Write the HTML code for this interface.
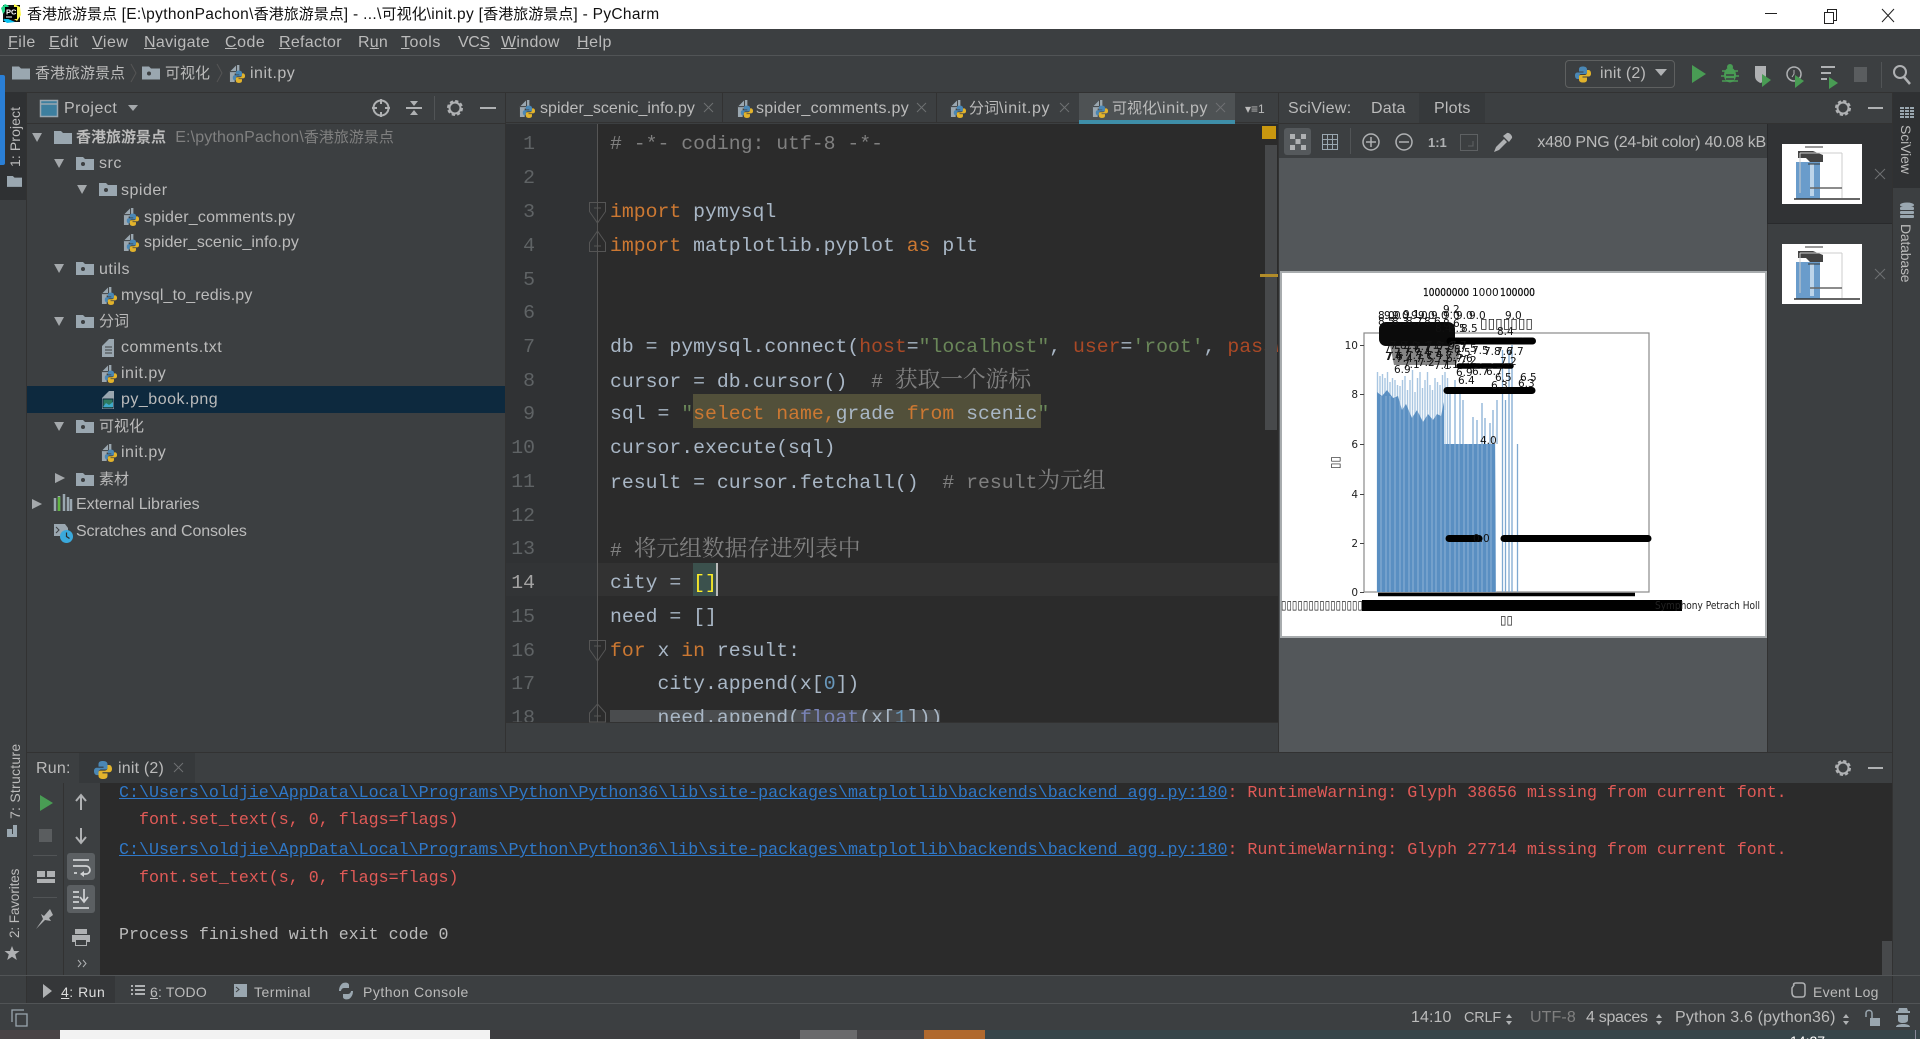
<!DOCTYPE html>
<html lang="zh"><head><meta charset="utf-8"><title>PyCharm</title>
<style>
*{box-sizing:border-box}
html,body{margin:0;padding:0;width:1920px;height:1039px;overflow:hidden;background:#3c3f41}
body{position:relative;font:16px/20px "Liberation Sans","Noto Sans CJK SC",sans-serif;color:#bbb}
.b{position:absolute}
.t{position:absolute;white-space:pre;letter-spacing:.5px;height:20px;line-height:20px}
.z{font-size:15px;letter-spacing:0}
.code{position:absolute;left:610px;white-space:pre;font:19.8px/34px "Liberation Mono","Noto Serif CJK SC",monospace;height:34px;color:#a9b7c6}
.n{position:absolute;width:24px;left:511px;text-align:right;font:19.8px/34px "Liberation Mono",monospace;height:34px;color:#5f6365}
.k{color:#cc7832}.c{color:#808080}.s{color:#6a8759}.a{color:#aa4926}.d{color:#6897bb}.bi{color:#7a84b8}
.cj{font-size:22.7px;font-family:"Noto Serif CJK SC",serif}
.con{position:absolute;left:119px;white-space:pre;font:16.655px/28px "Liberation Mono",monospace;height:28px;color:#e05a57}
.lk{color:#2f78c8;text-decoration:underline}
.tb{font-size:14px}
.vl{position:absolute;writing-mode:vertical-rl;transform:rotate(180deg);white-space:pre;font-size:14px;line-height:16px;color:#bbb}
.vr{position:absolute;writing-mode:vertical-rl;white-space:pre;font-size:14px;line-height:16px;color:#bbb}
svg.o{position:absolute;left:0;top:0}
</style></head><body>

<!-- title bar -->
<div class="b" style="left:0;top:0;width:1920px;height:29px;background:#fff"></div>
<div class="t" style="left:27px;top:5px;color:#111;letter-spacing:.32px;font-size:15.5px"><span class="z">香港旅游景点</span> [E:\pythonPachon\<span class="z">香港旅游景点</span>] - ...\<span class="z">可视化</span>\init.py [<span class="z">香港旅游景点</span>] - PyCharm</div>

<!-- menu -->
<div class="b" style="left:0;top:55px;width:1920px;height:1px;background:#515456"></div>
<div class="t" style="left:8px;top:33px"><u>F</u>ile</div>
<div class="t" style="left:49px;top:33px"><u>E</u>dit</div>
<div class="t" style="left:92px;top:33px"><u>V</u>iew</div>
<div class="t" style="left:144px;top:33px;letter-spacing:.35px"><u>N</u>avigate</div>
<div class="t" style="left:225px;top:33px"><u>C</u>ode</div>
<div class="t" style="left:279px;top:33px;letter-spacing:.3px"><u>R</u>efactor</div>
<div class="t" style="left:358px;top:33px;letter-spacing:.2px">R<u>u</u>n</div>
<div class="t" style="left:401px;top:33px"><u>T</u>ools</div>
<div class="t" style="left:458px;top:33px;letter-spacing:-.4px">VC<u>S</u></div>
<div class="t" style="left:501px;top:33px;letter-spacing:.3px"><u>W</u>indow</div>
<div class="t" style="left:577px;top:33px"><u>H</u>elp</div>

<!-- nav -->
<div class="t" style="left:35px;top:64px"><span class="z">香港旅游景点</span></div>
<div class="t" style="left:165px;top:64px"><span class="z">可视化</span></div>
<div class="t" style="left:250px;top:64px">init.py</div>

<!-- backgrounds -->
<div class="b" style="left:0;top:92px;width:1920px;height:1px;background:#323232"></div>
<div class="b" style="left:0;top:92px;width:26px;height:108px;background:#2f3133"></div>
<div class="b" style="left:0;top:75px;width:5px;height:90px;background:#2a7fd6;border-radius:0 2px 2px 0"></div>
<div class="b" style="left:26px;top:92px;width:1px;height:911px;background:#323232"></div>
<div class="b" style="left:27px;top:123px;width:478px;height:1px;background:#323232"></div>
<div class="b" style="left:27px;top:386px;width:478px;height:27px;background:#0d293e"></div>
<div class="b" style="left:505px;top:92px;width:1px;height:660px;background:#323232"></div>

<!-- left vertical tabs -->
<div class="vl" style="left:7px;top:107px;height:60px;letter-spacing:.1px">1: Project</div>
<div class="vl" style="left:7px;top:745px;height:74px;letter-spacing:.25px">7: Structure</div>
<div class="vl" style="left:7px;top:870px;height:68px;letter-spacing:-.1px;font-size:13.5px">2: Favorites</div>

<!-- project header & tree -->
<div class="t" style="left:64px;top:99px">Project</div>
<div class="t" style="left:76px;top:128px"><b class="z">香港旅游景点</b><span style="color:#808080;letter-spacing:.15px">  E:\pythonPachon\<span class="z">香港旅游景点</span></span></div>
<div class="t" style="left:99px;top:154px">src</div>
<div class="t" style="left:121px;top:181px">spider</div>
<div class="t" style="left:144px;top:208px;letter-spacing:.2px">spider_comments.py</div>
<div class="t" style="left:144px;top:233px;letter-spacing:.05px">spider_scenic_info.py</div>
<div class="t" style="left:99px;top:260px">utils</div>
<div class="t" style="left:121px;top:286px;letter-spacing:.15px">mysql_to_redis.py</div>
<div class="t" style="left:99px;top:312px"><span class="z">分词</span></div>
<div class="t" style="left:121px;top:338px">comments.txt</div>
<div class="t" style="left:121px;top:364px">init.py</div>
<div class="t" style="left:121px;top:390px">py_book.png</div>
<div class="t" style="left:99px;top:417px"><span class="z">可视化</span></div>
<div class="t" style="left:121px;top:443px">init.py</div>
<div class="t" style="left:99px;top:470px"><span class="z">素材</span></div>
<div class="t" style="left:76px;top:495px;letter-spacing:-.05px">External Libraries</div>
<div class="t" style="left:76px;top:522px;letter-spacing:-.12px">Scratches and Consoles</div>

<!-- tabs -->
<div class="b" style="left:506px;top:93px;width:772px;height:30px;background:#3c3f41;border-bottom:1px solid #323232"></div>
<div class="b" style="left:722px;top:93px;width:1px;height:30px;background:#323232"></div>
<div class="b" style="left:936px;top:93px;width:1px;height:30px;background:#323232"></div>
<div class="b" style="left:1079px;top:93px;width:156px;height:31px;background:#4e5254;border-bottom:4px solid #3e8ea8"></div>
<div class="t" style="left:540px;top:99px;letter-spacing:.05px">spider_scenic_info.py</div>
<div class="t" style="left:756px;top:99px;letter-spacing:.3px">spider_comments.py</div>
<div class="t" style="left:969px;top:99px;letter-spacing:.6px"><span class="z">分词</span>\init.py</div>
<div class="t" style="left:1112px;top:99px;letter-spacing:.6px"><span class="z">可视化</span>\init.py</div>
<div class="t" style="left:1245px;top:99px;font-size:12px;letter-spacing:0">▾≡1</div>

<!-- editor -->
<div class="b" style="left:506px;top:124px;width:91px;height:598px;background:#303234"></div>
<div class="b" style="left:597px;top:124px;width:681px;height:598px;background:#2b2b2b"></div>
<div class="b" style="left:597px;top:563px;width:681px;height:33px;background:#323232"></div>
<div class="b" style="left:506px;top:563px;width:91px;height:33px;background:#323436"></div>
<div class="b" style="left:597px;top:124px;width:1px;height:598px;background:#555"></div>
<div class="b" style="left:693px;top:394px;width:348px;height:34px;background:#52503a"></div>
<div class="b" style="left:693px;top:563px;width:24px;height:33px;background:#3b514d"></div>
<div class="b" style="left:716px;top:563px;width:2px;height:33px;background:#bbb"></div>
<div class="b" style="left:610px;top:710px;width:330px;height:12px;background:#4a4c4e"></div>

<div class="b" style="left:506px;top:124px;width:772px;height:598px;overflow:hidden">
<div style="position:absolute;left:-506px;top:-124px;width:1920px;height:1039px">
<div class="n" style="top:127px">1</div><div class="n" style="top:161px">2</div><div class="n" style="top:195px">3</div><div class="n" style="top:229px">4</div><div class="n" style="top:263px">5</div><div class="n" style="top:296px">6</div><div class="n" style="top:330px">7</div><div class="n" style="top:364px">8</div><div class="n" style="top:397px">9</div><div class="n" style="top:431px">10</div><div class="n" style="top:465px">11</div><div class="n" style="top:499px">12</div><div class="n" style="top:532px">13</div><div class="n" style="top:566px;color:#a4a3a3">14</div><div class="n" style="top:600px">15</div><div class="n" style="top:634px">16</div><div class="n" style="top:667px">17</div><div class="n" style="top:701px">18</div>
<div class="code c" style="top:127px"># -*- coding: utf-8 -*-</div>
<div class="code" style="top:195px"><span class="k">import</span> pymysql</div>
<div class="code" style="top:229px"><span class="k">import</span> matplotlib.pyplot <span class="k">as</span> plt</div>
<div class="code" style="top:330px">db = pymysql.connect(<span class="a">host</span>=<span class="s">"localhost"</span>, <span class="a">user</span>=<span class="s">'root'</span>, <span class="a">passwd</span>=<span class="s">'123456'</span></div>
<div class="code" style="top:361px">cursor = db.cursor()  <span class="c"># <span class="cj">获取一个游标</span></span></div>
<div class="code" style="top:397px">sql = <span class="s">"</span><span class="k">select name,</span>grade <span class="k">from</span> scenic<span class="s">"</span></div>
<div class="code" style="top:431px">cursor.execute(sql)</div>
<div class="code" style="top:462px">result = cursor.fetchall()  <span class="c"># result<span class="cj">为元组</span></span></div>
<div class="code c" style="top:530px"># <span class="cj">将元组数据存进列表中</span></div>
<div class="code" style="top:566px">city = <span style="color:#ffef28">[]</span></div>
<div class="code" style="top:600px">need = []</div>
<div class="code" style="top:634px"><span class="k">for</span> x <span class="k">in</span> result:</div>
<div class="code" style="top:667px">    city.append(x[<span class="d">0</span>])</div>
<div class="code" style="top:701px">    need.append(<span class="bi">float</span>(x[<span class="d">1</span>]))</div>
</div></div>
<div class="b" style="left:1265px;top:145px;width:12px;height:285px;background:#47494b"></div>
<div class="b" style="left:1262px;top:126px;width:14px;height:13px;background:#c9970f"></div>
<div class="b" style="left:1260px;top:274px;width:18px;height:3px;background:#b28c2a"></div>
<div class="b" style="left:506px;top:722px;width:772px;height:1px;background:#323232"></div>

<!-- sciview -->
<div class="b" style="left:1278px;top:92px;width:1px;height:660px;background:#323232"></div>
<div class="b" style="left:1419px;top:93px;width:66px;height:30px;background:#36393b"></div>
<div class="b" style="left:1279px;top:123px;width:613px;height:1px;background:#323232"></div>
<div class="t" style="left:1288px;top:99px;letter-spacing:.3px">SciView:</div>
<div class="t" style="left:1371px;top:99px;letter-spacing:.2px">Data</div>
<div class="t" style="left:1434px;top:99px;letter-spacing:.2px">Plots</div>
<div class="b" style="left:1279px;top:158px;width:488px;height:594px;background:#53575a"></div>
<div class="b" style="left:1284px;top:128px;width:27px;height:27px;background:#55595c;border-radius:3px"></div>
<div class="b" style="left:1535px;top:132px;width:232px;height:20px;overflow:hidden"><div class="t" style="right:1px;top:1px;letter-spacing:-.22px">640 x480 PNG (24-bit color) 40.08 kB</div></div>
<div class="b" style="left:1767px;top:124px;width:125px;height:100px;background:#313335;border-left:1px solid #292a2c;border-bottom:1px solid #292a2c"></div>
<div class="b" style="left:1767px;top:224px;width:1px;height:528px;background:#323232"></div>
<div class="b" style="left:1892px;top:92px;width:1px;height:911px;background:#323232"></div>
<div class="b" style="left:1893px;top:92px;width:27px;height:96px;background:#2f3133"></div>
<div class="vr" style="left:1898px;top:125px;letter-spacing:-.1px">SciView</div>
<div class="vr" style="left:1898px;top:224px;letter-spacing:-.2px">Database</div>

<!-- combo -->
<div class="b" style="left:1565px;top:60px;width:110px;height:28px;border:1px solid #5e6060;border-radius:4px"></div>
<div class="t" style="left:1600px;top:64px;letter-spacing:.2px">init (2)</div>

<!-- run panel -->
<div class="b" style="left:27px;top:752px;width:1865px;height:1px;background:#323232"></div>
<div class="b" style="left:79px;top:753px;width:116px;height:30px;background:#36393b"></div>
<div class="t" style="left:36px;top:759px;letter-spacing:.2px">Run:</div>
<div class="t" style="left:118px;top:759px;letter-spacing:.2px">init (2)</div>
<div class="b" style="left:100px;top:783px;width:1792px;height:192px;background:#2b2b2b"></div>
<div class="b" style="left:63px;top:783px;width:1px;height:192px;background:#323232"></div>
<div class="b" style="left:67px;top:853px;width:28px;height:27px;background:#5b5f62;border-radius:3px"></div>
<div class="b" style="left:67px;top:885px;width:28px;height:28px;background:#5b5f62;border-radius:3px"></div>
<div class="b" style="left:33px;top:855px;width:24px;height:1px;background:#515456"></div>
<div class="b" style="left:33px;top:897px;width:24px;height:1px;background:#515456"></div>
<div class="con" style="top:779px"><span class="lk">C:\Users\oldjie\AppData\Local\Programs\Python\Python36\lib\site-packages\matplotlib\backends\backend_agg.py:180</span>: RuntimeWarning: Glyph 38656 missing from current font.</div>
<div class="con" style="top:806px">  font.set_text(s, 0, flags=flags)</div>
<div class="con" style="top:836px"><span class="lk">C:\Users\oldjie\AppData\Local\Programs\Python\Python36\lib\site-packages\matplotlib\backends\backend_agg.py:180</span>: RuntimeWarning: Glyph 27714 missing from current font.</div>
<div class="con" style="top:864px">  font.set_text(s, 0, flags=flags)</div>
<div class="con" style="top:921px;color:#bbb">Process finished with exit code 0</div>
<div class="b" style="left:1882px;top:941px;width:10px;height:34px;background:#47494b"></div>

<!-- bottom tool bar -->
<div class="b" style="left:0;top:975px;width:1920px;height:1px;background:#515456"></div>
<div class="b" style="left:27px;top:976px;width:88px;height:27px;background:#353739"></div>
<div class="b" style="left:0;top:1003px;width:1920px;height:1px;background:#515456"></div>
<div class="t tb" style="left:61px;top:982px;color:#ddd"><u>4</u>: Run</div>
<div class="t tb" style="left:150px;top:982px;letter-spacing:.2px"><u>6</u>: TODO</div>
<div class="t tb" style="left:254px;top:982px">Terminal</div>
<div class="t tb" style="left:363px;top:982px">Python Console</div>
<div class="t tb" style="left:1813px;top:982px;letter-spacing:.3px">Event Log</div>

<!-- status -->
<div class="t" style="left:1411px;top:1008px;letter-spacing:.1px">14:10</div>
<div class="t" style="left:1464px;top:1008px;letter-spacing:-.2px;font-size:14.5px">CRLF</div>
<div class="t" style="left:1530px;top:1008px;letter-spacing:.1px;color:#808080">UTF-8</div>
<div class="t" style="left:1586px;top:1008px;letter-spacing:-.3px">4 spaces</div>
<div class="t" style="left:1675px;top:1008px;letter-spacing:.15px">Python 3.6 (python36)</div>

<!-- taskbar -->
<div class="b" style="left:0;top:1030px;width:1920px;height:9px;background:#37454a"></div>
<div class="b" style="left:0;top:1030px;width:60px;height:9px;background:#4a4446"></div>
<div class="b" style="left:60px;top:1030px;width:430px;height:9px;background:#f2f2f2"></div>
<div class="b" style="left:490px;top:1030px;width:310px;height:9px;background:#3e3d40"></div>
<div class="b" style="left:800px;top:1030px;width:57px;height:9px;background:#6a6a6c"></div>
<div class="b" style="left:857px;top:1030px;width:67px;height:9px;background:#474649"></div>
<div class="b" style="left:924px;top:1030px;width:61px;height:9px;background:#b0692e"></div>
<div class="b" style="left:1915px;top:1030px;width:1px;height:9px;background:#889"></div>

<!-- image viewer -->
<div class="b" style="left:1280px;top:271px;width:487px;height:367px;background:#fff;border:2px solid #a8acae"></div>

<svg class="o" width="1920" height="1039" viewBox="0 0 1920 1039" xmlns="http://www.w3.org/2000/svg">
<defs>
<symbol id="py" viewBox="0 0 16 16" overflow="visible"><path d="M8 0C5 0 4 1 4 3v2h4.500v1H2.500C1 6 0 7 0 9s1 3.500 2.500 3.500H4V10c0-1.500 1-2.500 2.500-2.500h4C11.500 7.500 12 7 12 6V3c0-2-1.500-3-4-3z" fill="#4a87b5"/><path d="M8 16c3 0 4-1 4-3v-2H7.500v-1h6C15 10 16 9 16 7s-1-3.500-2.500-3.500H12V6c0 1.500-1 2.500-2.500 2.500h-4C4.500 8.500 4 9 4 10v3c0 2 1.500 3 4 3z" fill="#e2b32c"/></symbol>
<symbol id="pf" viewBox="0 0 18 20" overflow="visible"><path d="M1 8L8 1h3v9H1z" fill="#9aa7b0"/><path d="M1 8h7V1" fill="none" stroke="#3c3f41"/><path d="M1 9h5v10H1z" fill="#9aa7b0"/><use href="#py" x="4" y="7" width="13" height="13"/></symbol>
<symbol id="fd" viewBox="0 0 18 14"><path d="M0 1h7l2 2h9v11H0z" fill="#9aa7b0"/><circle cx="7" cy="8" r="2" fill="#3c3f41"/></symbol>
<symbol id="fr" viewBox="0 0 18 14"><path d="M0 1h7l2 2h9v11H0z" fill="#9aa7b0"/></symbol>
<symbol id="dn" viewBox="0 0 12 10"><path d="M0 0h11L5.500 10z" fill="#a4a8ab"/></symbol>
<symbol id="rt" viewBox="0 0 12 12"><path d="M0 0l11 5.500L0 11z" fill="#a4a8ab"/></symbol>
<symbol id="gear" viewBox="0 0 16 16"><circle cx="8" cy="8" r="5.500" fill="none" stroke="#afb1b3" stroke-width="2"/><circle cx="8" cy="8" r="6.500" fill="none" stroke="#afb1b3" stroke-width="3" stroke-dasharray="3 2.100"/></symbol>
</defs>

<!-- window controls -->
<path d="M1765 13.500h12" stroke="#222"/>
<path d="M1824.500 12.500h9v11h-9z M1827.500 12.500v-3h9v11h-3" fill="none" stroke="#222"/>
<path d="M1882 9l12 13M1894 9l-12 13" stroke="#222"/>

<!-- pycharm logo -->
<rect x="3" y="5" width="17" height="17" fill="#111"/>
<path d="M1 8l4-4 4 2-6 8z" fill="#21d789"/><path d="M14 4l6 3 1 8-4 6-3-2z" fill="#fcf84a"/><path d="M3 20l4 3 8-1-9-4z" fill="#07c3f2"/>
<rect x="5" y="7" width="12" height="12" fill="#000"/><text x="6" y="14.500" font-family="Liberation Sans" font-size="7.500" font-weight="700" fill="#fff">PC</text><rect x="6" y="16.500" width="6" height="1" fill="#fff"/>

<!-- nav icons -->
<use href="#fr" x="12" y="65" width="18" height="15"/>
<use href="#fd" x="142" y="65" width="18" height="15"/>
<path d="M131 64l5 9-5 9M217 64l5 9-5 9" fill="none" stroke="#555"/>
<use href="#pf" x="229" y="64" width="17" height="19"/>

<!-- left strip icons -->
<use href="#fr" x="7" y="175" width="15" height="12"/>
<path d="M7 829h5v5H7zM13 825h4v9h-4z" fill="#9aa7b0"/><rect x="7" y="834" width="10" height="3" fill="#9aa7b0"/>
<path d="M12 946l2 5h5.500l-4.300 3.400 1.600 5.600L12 956.800 7.200 960l1.600-5.600L4.500 951H10z" fill="#afb1b3"/>

<!-- project header icons -->
<rect x="40.500" y="100.500" width="17" height="16" fill="#3d7f9f" stroke="#9aa7b0" stroke-width="1.500"/><path d="M40 104h18" stroke="#9aa7b0" stroke-width="1.500"/>
<path d="M128 105h10l-5 6z" fill="#a4a8ab"/>
<g fill="none" stroke="#afb1b3" stroke-width="2"><circle cx="381" cy="108" r="7.500"/><path d="M381 99v5M381 112v5M372 108h5M385 108h5"/></g>
<path d="M406 108h16" stroke="#afb1b3" stroke-width="2"/><path d="M414 106l-4-5h8zM414 110l-4 5h8z" fill="#afb1b3"/>
<path d="M434.500 96v24" stroke="#515456"/>
<use href="#gear" x="447" y="100" width="16" height="16"/>
<path d="M480 108h16" stroke="#afb1b3" stroke-width="2"/>

<!-- tree arrows -->
<use href="#dn" x="32" y="133" width="11" height="9"/><use href="#dn" x="54" y="159" width="11" height="9"/><use href="#dn" x="77" y="185" width="11" height="9"/><use href="#dn" x="54" y="264" width="11" height="9"/><use href="#dn" x="54" y="317" width="11" height="9"/><use href="#dn" x="54" y="422" width="11" height="9"/>
<use href="#rt" x="55" y="473" width="11" height="11"/><use href="#rt" x="32" y="499" width="11" height="11"/>
<!-- tree icons -->
<use href="#fr" x="54" y="130" width="18" height="14"/>
<use href="#fd" x="76" y="156" width="18" height="14"/><use href="#fd" x="99" y="182" width="18" height="14"/><use href="#fd" x="76" y="261" width="18" height="14"/><use href="#fd" x="76" y="314" width="18" height="14"/><use href="#fd" x="76" y="419" width="18" height="14"/><use href="#fd" x="76" y="472" width="18" height="14"/>
<use href="#pf" x="123" y="207" width="17" height="19"/><use href="#pf" x="123" y="233" width="17" height="19"/><use href="#pf" x="101" y="286" width="17" height="19"/><use href="#pf" x="101" y="364" width="17" height="19"/><use href="#pf" x="101" y="443" width="17" height="19"/>
<path d="M102 346l7-7h5v18h-12z" fill="#9aa7b0"/><path d="M105 347h7M105 350h7M105 353h7" stroke="#3c3f41"/>
<path d="M102 398l7-7h5v18h-12z" fill="#9aa7b0"/><rect x="103" y="399" width="10" height="9" fill="#2f7a5f" stroke="#0d293e"/><path d="M103 407l3-4 3 2 4-3v5z" fill="#3ea9c9"/>
<path d="M55 498v13M59 496v15M64 494v17M68 497v14M71 499v12" stroke="#9aa7b0" stroke-width="2.500"/><path d="M59 497v14" stroke="#62b543" stroke-width="2.500"/>
<path d="M54 524h11l3 4v8H54z" fill="#9aa7b0"/><path d="M56 527l3 3-3 3" stroke="#3c3f41" fill="none"/><circle cx="66.500" cy="536.500" r="6.500" fill="#3aa9dc"/><path d="M66.500 532.500v4l3 2" stroke="#2b2b2b" stroke-width="1.200" fill="none"/>

<!-- tab icons -->
<use href="#pf" x="519" y="99" width="17" height="19"/><use href="#pf" x="737" y="99" width="17" height="19"/><use href="#pf" x="950" y="99" width="17" height="19"/><use href="#pf" x="1092" y="99" width="17" height="19"/>
<g stroke="#6e7072" fill="none"><path d="M704 103l9 9M713 103l-9 9M917 103l9 9M926 103l-9 9M1060 103l9 9M1069 103l-9 9M1216 103l9 9M1225 103l-9 9"/></g>

<!-- folding -->
<g fill="none" stroke="#555" stroke-width="1">
<path d="M589.500 202.500h16v9l-8 11.500-8-11.500zM594 208h7"/>
<path d="M589.500 251.500h16v-9l-8-11.500-8 11.500zM594 246h7"/>
<path d="M589.500 640.500h16v9l-8 11.500-8-11.500zM594 646h7"/>
<path d="M589.500 722h16v-9l-8-9-8 9zM594 716h7"/>
</g>

<!-- run toolbar top -->
<use href="#py" x="1575" y="66" width="16" height="17"/>
<path d="M1655 69h12l-6 7z" fill="#afb1b3"/>
<path d="M1692 65l14 9-14 9z" fill="#499c54"/>
<g fill="#499c54"><ellipse cx="1730" cy="75" rx="6" ry="7.500"/><circle cx="1730" cy="67" r="3"/><path d="M1722 71h16M1721 76h18M1722 81h16" stroke="#499c54" stroke-width="1.500"/><path d="M1726 75h8M1726 79h8" stroke="#3c3f41" stroke-width="1.500"/></g>
<path d="M1755 66h11v10c0 4-3 6-5.500 7-2.500-1-5.500-3-5.500-7z" fill="#afb1b3"/><path d="M1762 74l9 6-9 7z" fill="#499c54"/>
<circle cx="1794" cy="74" r="7" fill="none" stroke="#afb1b3" stroke-width="1.500"/><path d="M1794 70v4l-2 3" stroke="#afb1b3" fill="none"/><path d="M1795 75l9 6-9 7z" fill="#499c54"/>
<path d="M1821 67h14M1821 73h10M1821 79h6" stroke="#afb1b3" stroke-width="2"/><path d="M1829 77l9 6-9 6z" fill="#499c54"/>
<rect x="1854" y="67" width="13" height="15" fill="#5a5d5f"/>
<path d="M1881.500 62v26" stroke="#515456"/>
<circle cx="1900" cy="72" r="6" fill="none" stroke="#afb1b3" stroke-width="2"/><path d="M1904 77l6 7" stroke="#afb1b3" stroke-width="2.500"/>

<!-- sciview icons -->
<use href="#gear" x="1835" y="100" width="16" height="16"/>
<path d="M1868 108h15" stroke="#afb1b3" stroke-width="2"/>
<g fill="#afb1b3"><rect x="1290" y="134" width="5" height="5"/><rect x="1301" y="134" width="5" height="5"/><rect x="1295.500" y="139" width="5" height="5"/><rect x="1290" y="145" width="5" height="5"/><rect x="1301" y="145" width="5" height="5"/></g>
<path d="M1322.500 134.500h15v15h-15zM1327.500 134.500v15M1332.500 134.500v15M1322.500 139.500h15M1322.500 144.500h15" fill="none" stroke="#9aa7b0"/>
<path d="M1350.500 128v26" stroke="#515456"/>
<g fill="none" stroke="#afb1b3" stroke-width="1.500"><circle cx="1371" cy="142" r="8"/><path d="M1366 142h10M1371 137v10"/><circle cx="1404" cy="142" r="8"/><path d="M1399 142h10"/></g>
<text x="1428" y="147" font-family="Liberation Sans" font-size="13" font-weight="700" fill="#afb1b3">1:1</text>
<path d="M1460.500 134.500h17v16h-17z" fill="none" stroke="#5e6163"/><path d="M1468 146h5v-5" stroke="#5e6163" fill="none"/>
<path d="M1494 152l2-5 8-8 3 3-8 8zM1503 136l6 6 3-4c1-2-3-6-5-5z" fill="#afb1b3"/>

<!-- right strip icons -->
<g fill="#9aa7b0"><rect x="1900" y="107" width="14" height="2"/><rect x="1900" y="110" width="14" height="2"/><rect x="1900" y="113" width="14" height="2"/><rect x="1900" y="116" width="14" height="2"/></g><path d="M1904.500 107v11M1909.500 107v11" stroke="#2f3133"/>
<g fill="#9aa7b0"><ellipse cx="1907" cy="205" rx="7" ry="2.500"/><rect x="1900" y="207" width="14" height="3" rx="1"/><rect x="1900" y="211" width="14" height="3" rx="1"/><rect x="1900" y="215" width="14" height="3" rx="1"/></g>

<!-- thumbnails -->
<g>
<rect x="1782" y="144" width="80" height="60" fill="#fff"/>
<rect x="1796" y="162" width="24" height="37" fill="#6a9ccb"/><rect x="1810" y="164" width="4" height="32" fill="#bcd4ea"/>
<path d="M1798 151h15l10 4v7h-13l-4-4h-8z" fill="#222" opacity=".85"/><path d="M1805 147h18M1808 164h12" stroke="#333"/>
<path d="M1800 153v40M1842 153v45M1800 153h42" stroke="#ccc" fill="none"/>
<path d="M1810 188h32" stroke="#666" stroke-width="1.500"/><path d="M1794 199h66" stroke="#333" stroke-width="1.500"/>
</g>
<g>
<rect x="1782" y="244" width="80" height="60" fill="#fff"/>
<rect x="1796" y="262" width="24" height="37" fill="#6a9ccb"/><rect x="1810" y="264" width="4" height="32" fill="#bcd4ea"/>
<path d="M1798 251h15l10 4v7h-13l-4-4h-8z" fill="#222" opacity=".85"/><path d="M1805 247h18M1808 264h12" stroke="#333"/>
<path d="M1800 253v40M1842 253v45M1800 253h42" stroke="#ccc" fill="none"/>
<path d="M1810 288h32" stroke="#666" stroke-width="1.500"/><path d="M1794 299h66" stroke="#333" stroke-width="1.500"/>
</g>
<path d="M1875 169l10 10M1885 169l-10 10M1875 269l10 10M1885 269l-10 10" stroke="#6e7072"/>

<!-- chart -->
<rect x="1364" y="333" width="285" height="259" fill="none" stroke="#8a8a8a" stroke-width="1.200"/>
<!-- light bar tips -->
<g stroke="#a9c6e2" stroke-width="1.400"><path d="M1377.500 592V372M1380 592V376M1382.500 592V374M1385 592V378M1387.500 592V372M1390 592V382M1392.500 592V378M1395 592V380M1397.500 592V385M1400 592V386M1402.500 592V380M1405 592V376M1407.500 592V390M1410 592V380M1412.500 592V370M1415 592V392M1417.500 592V378M1420 592V372M1422.500 592V388M1425 592V380M1427.500 592V372M1430 592V385M1432.500 592V390M1435 592V378M1437.500 592V382M1440 592V385M1442.500 592V375M1445 592V372M1447.500 592V378"/></g>
<path d="M1377 592V392l5 4 5-6 6 8 5-2 4 14 4-6 6 14 5-8 6 12 5-8 5 6 4-6 4 2 3-14V444h51v-22l1 170z" fill="#5a8fc2"/>
<g stroke="#fff" stroke-opacity=".4" stroke-width=".8"><path d="M1381 396v196M1386 396v196M1390 396v196M1395 396v196M1400 400v192M1404 400v192M1409 410v182M1413 410v182M1418 410v182M1423 410v182M1427 410v182M1432 410v182M1436 410v182M1441 410v182M1445 410v182M1450 444v148M1455 444v148M1459 444v148M1464 444v148M1468 444v148M1473 444v148M1478 444v148M1482 444v148M1487 444v148M1491 444v148M1496 444v148"/></g>
<g stroke="#7fa9d1" stroke-width="1.200"><path d="M1450 444V393M1455 444V380M1460 444V393M1463 444V400M1473 444V417M1477 444V420M1482 444V403M1485 444V418M1490 444V423M1493 444V410M1497 444V400"/></g>
<g stroke="#7fa9d1" stroke-width="1.300"><path d="M1502.500 592V350M1505.500 592V400M1509 592V350M1512 592V345M1517.500 592V444"/></g>
<!-- ticks -->
<g stroke="#444" stroke-width="1"><path d="M1360 345.500h4M1360 394.500h4M1360 444.500h4M1360 494.500h4M1360 543.500h4M1360 592.500h4"/></g>
<g font-family="DejaVu Sans" font-size="10.500" fill="#222" text-anchor="end"><text x="1358" y="349">10</text><text x="1358" y="398">8</text><text x="1358" y="448">6</text><text x="1358" y="498">4</text><text x="1358" y="547">2</text><text x="1358" y="596">0</text></g>
<!-- dense label mass -->
<rect x="1379" y="322" width="76" height="24" rx="7" fill="#0b0b0b"/>
<path d="M1390 345h68l2 8-4 12h-62z" fill="#222" opacity=".55"/>
<g stroke="#000" stroke-linecap="round" fill="none">
<path d="M1450 341h83" stroke-width="7" stroke-dasharray="9 1.500"/>
<path d="M1447 390.500h85" stroke-width="7"/>
<path d="M1459 366h52" stroke-width="5.500" stroke-dasharray="9 2.500"/>
<path d="M1449 538.500h30" stroke-width="7"/>
<path d="M1504 538.500h144" stroke-width="7"/>
<path d="M1378 594.500h257" stroke-width="3.500" stroke-linecap="butt"/>
<path d="M1362 605.500h320" stroke-width="11" stroke-linecap="butt"/>
</g>
<g font-family="DejaVu Sans" font-size="10.500" fill="#111">
<text x="1423" y="296" textLength="46" lengthAdjust="spacingAndGlyphs" stroke="#111" stroke-width=".3">10000000</text><text x="1472" y="296">1000</text><text x="1500" y="296" textLength="35" lengthAdjust="spacingAndGlyphs" stroke="#111" stroke-width=".3">100000</text>
<text x="1378" y="319">8.0</text><text x="1384" y="319">9.0</text><text x="1392" y="319">9.0</text><text x="1403" y="318">9.1</text><text x="1411" y="319">9.0</text><text x="1418" y="319">9.0</text><text x="1431" y="319">9.0</text><text x="1443" y="319">9.0</text><text x="1456" y="319">9.0</text><text x="1469" y="319">9.0</text><text x="1443" y="313">9.2</text><text x="1505" y="319">9.0</text>
<text x="1378" y="325">8.5</text><text x="1392" y="325">8.3</text><text x="1406" y="325">8.7</text><text x="1424" y="325">8.6</text><text x="1443" y="327">8.6</text><text x="1461" y="332">8.5</text><text x="1497" y="335">8.4</text><text x="1449" y="332">8.5</text><text x="1435" y="332">8.4</text>
<text x="1384" y="353">7.5</text><text x="1394" y="356">7.7</text><text x="1404" y="353">7.6</text><text x="1414" y="356">7.4</text><text x="1424" y="353">7.5</text><text x="1434" y="356">7.7</text><text x="1444" y="353">7.8</text><text x="1454" y="356">7.5</text>
<text x="1386" y="360">7.6</text><text x="1396" y="362">7.4</text><text x="1406" y="359">7.7</text><text x="1416" y="362">7.5</text><text x="1426" y="359">7.4</text><text x="1436" y="362">7.6</text><text x="1446" y="359">7.5</text><text x="1456" y="362">7.6</text>
<text x="1390" y="349">7.8</text><text x="1402" y="349">7.9</text><text x="1414" y="350">7.7</text><text x="1426" y="349">7.8</text><text x="1438" y="350">7.9</text><text x="1450" y="349">7.7</text><text x="1460" y="352">7.5</text><text x="1472" y="354">7.5</text><text x="1484" y="355">7.8</text><text x="1496" y="355">7.6</text><text x="1507" y="355">7.7</text>
<text x="1385" y="360">7.4</text>
<text x="1394" y="373">6.9</text><text x="1403" y="368">7.1</text><text x="1418" y="366">7.2</text><text x="1434" y="369">7.1</text><text x="1442" y="368">7.1</text><text x="1460" y="364">7.2</text><text x="1500" y="365">7.2</text>
<text x="1456" y="376">6.9</text><text x="1472" y="375">6.7</text><text x="1486" y="375">6.7</text><text x="1495" y="381">6.5</text><text x="1520" y="381">6.5</text><text x="1518" y="387">6.3</text>
<text x="1458" y="384">6.4</text><text x="1491" y="389">6.3</text>
<text x="1480" y="444">4.0</text>
<text x="1473" y="542">0.0</text>
</g>
<g font-family="DejaVu Sans,sans-serif" fill="#222">
<text x="1480" y="328" font-size="14" textLength="53" lengthAdjust="spacingAndGlyphs">▯▯▯▯▯▯▯</text>
<text transform="translate(1339 469) rotate(-90)" font-size="12" textLength="13" lengthAdjust="spacingAndGlyphs">▯▯</text>
<text x="1500" y="624" font-size="12" textLength="13" lengthAdjust="spacingAndGlyphs">▯▯</text>
<text x="1281" y="609" font-size="12" textLength="82" lengthAdjust="spacingAndGlyphs">▯▯▯▯▯▯▯▯▯▯▯▯▯▯▯</text>
<text x="1655" y="609" font-size="10.500" textLength="105" lengthAdjust="spacingAndGlyphs">Symphony Petrach Holl</text>
</g>

<!-- run panel icons -->
<use href="#py" x="94" y="761" width="18" height="18"/>
<path d="M174 763l9 9M183 763l-9 9" stroke="#6e7072"/>
<use href="#gear" x="1835" y="760" width="16" height="16"/>
<path d="M1868 768h15" stroke="#afb1b3" stroke-width="2"/>
<path d="M40 795l13 8-13 8z" fill="#499c54"/>
<rect x="39" y="829" width="13" height="13" fill="#5a5d5f"/>
<path d="M81 810v-14M76 801l5-6 5 6M81 828v14M76 837l5 6 5-6" fill="none" stroke="#afb1b3" stroke-width="2"/>
<path d="M37 871h8v6h-8zM47 871h8v6h-8zM37 879h18v4H37z" fill="#afb1b3"/>
<path d="M50 909l3 6-4 3 2 3-6-1-9 9 7-10-2-5 3 2z" fill="#afb1b3"/>
<path d="M73 860h16M73 866h13a4 4 0 010 8h-4M74 873h3" fill="none" stroke="#d0d2d4" stroke-width="1.700"/><path d="M84 871l-4 3 4 3z" fill="#d0d2d4"/>
<path d="M73 892h6M73 897h6M73 902h6M73 908h16M84 889v12M80 897l4 5 4-5" fill="none" stroke="#d0d2d4" stroke-width="1.700"/>
<path d="M75 934h12v-5H75zM72 935h18v7h-3v4H75v-4h-3z" fill="#afb1b3"/><rect x="76" y="940" width="10" height="5" fill="#3c3f41"/>
<path d="M78 960l3 3.500-3 3.500M83 960l3 3.500-3 3.500" fill="none" stroke="#afb1b3"/>

<!-- bottom icons -->
<path d="M43 984l9 7-9 7z" fill="#afb1b3"/>
<path d="M131 986h2M131 990h2M131 994h2M135 986h10M135 990h10M135 994h10" stroke="#afb1b3" stroke-width="2"/>
<rect x="234" y="984" width="13" height="13" fill="#9aa7b0"/><path d="M236 987l3 2.500-3 2.500" stroke="#3c3f41" fill="none"/>
<path d="M343 983c3-1 6 0 6 2v3h-5c-2 0-3 2-3 3h-2c0-3 1-6 4-8zM349 999c-3 1-6 0-6-2v-3h5c2 0 3-2 3-3h2c0 3-1 6-4 8z" fill="#9aa7b0"/>
<path d="M1794 985c-1-1 0-2 2-2h6c2 0 3 1 3 3v8c0 2-1 3-3 3h-6c-3 0-4-2-4-5v-4z" fill="none" stroke="#afb1b3" stroke-width="1.500"/>

<!-- status icons -->
<path d="M12 1022v-12h12M16 1026h11v-12H16z" fill="none" stroke="#9aa7b0" stroke-width="1.300"/>
<path d="M1509 1014l-3 4h6zM1509 1025l-3-4h6zM1659 1014l-3 4h6zM1659 1025l-3-4h6zM1846 1014l-3 4h6zM1846 1025l-3-4h6z" fill="#afb1b3"/>
<rect x="1870" y="1018" width="10" height="8" fill="#9aa7b0"/><path d="M1866 1017v-4c0-3.500 6-3.500 6 0v5" fill="none" stroke="#9aa7b0" stroke-width="1.500"/>
<path d="M1899 1008h8l1 3h2v2h-14v-2h2zM1898 1015h10v5c0 2-2 3-5 3s-5-1-5-3zM1896 1027c0-2 3-3 7-3s7 1 7 3z" fill="#9aa7b0"/>
<text x="1790" y="1046" font-family="Liberation Sans" font-size="14" fill="#fff">14:27</text>
</svg>
</body></html>
